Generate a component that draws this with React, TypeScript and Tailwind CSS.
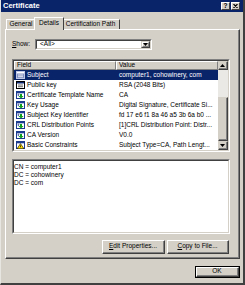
import React from "react";

const font = { fontFamily: '"Liberation Sans", Arial, sans-serif' };

function DocIcon({ selected }: { selected?: boolean }) {
  return (
    <svg width="9" height="8" viewBox="0 0 9 8" className="shrink-0">
      <rect x="0.5" y="0.5" width="8" height="7" fill={selected ? "#7f8fc0" : "#ffffff"} stroke={selected ? "#c0c8e8" : "#000000"} />
      <rect x="1" y="1" width="7" height="1.5" fill={selected ? "#ffffff" : "#0a246a"} />
      <line x1="2" y1="4" x2="7" y2="4" stroke={selected ? "#ffffff" : "#404040"} strokeWidth="0.8" />
      <line x1="2" y1="5.7" x2="7" y2="5.7" stroke={selected ? "#ffffff" : "#404040"} strokeWidth="0.8" />
    </svg>
  );
}

function ExtIcon() {
  return (
    <svg width="9" height="8" viewBox="0 0 9 8" className="shrink-0">
      <rect x="0.5" y="0.5" width="8" height="7" fill="#ffffff" stroke="#1c3a8e" />
      <rect x="1" y="1" width="7" height="1.3" fill="#1c3a8e" />
      <path d="M1.5 3.2 L3 3.2 L2 4.6 L3 4.6" stroke="#1c3a8e" strokeWidth="0.7" fill="none" />
      <path d="M4 3 L6 3 L6 5 L7.5 5 L5 7.6 L2.5 5 L4 5 Z" fill="#10a020" />
    </svg>
  );
}

function WarnIcon() {
  return (
    <svg width="9" height="8" viewBox="0 0 9 8" className="shrink-0">
      <rect x="0.5" y="0.5" width="8" height="7" fill="#ffffff" stroke="#1c3a8e" />
      <rect x="1" y="1" width="7" height="1.3" fill="#1c3a8e" />
      <path d="M4.5 2.6 L8 7.8 L1 7.8 Z" fill="#ffe000" stroke="#000000" strokeWidth="0.6" />
      <line x1="4.5" y1="4.3" x2="4.5" y2="6.3" stroke="#000" strokeWidth="0.7" />
    </svg>
  );
}

function UpArrow() {
  return (
    <svg width="5" height="3" viewBox="0 0 5 3">
      <path d="M2.5 0 L5 3 L0 3 Z" fill="#000" />
    </svg>
  );
}
function DownArrow() {
  return (
    <svg width="5" height="3" viewBox="0 0 5 3">
      <path d="M0 0 L5 0 L2.5 3 Z" fill="#000" />
    </svg>
  );
}

function ScrollBtn({ children }: { children: React.ReactNode }) {
  return (
    <div className="h-[9px] w-[10px] border border-t-[#d4d0c8] border-l-[#d4d0c8] border-b-[#404040] border-r-[#404040] bg-[#d4d0c8]">
      <div className="h-full w-full border border-t-white border-l-white border-b-[#808080] border-r-[#808080] border-t-0 border-l-0 flex items-center justify-center">
        {children}
      </div>
    </div>
  );
}

function Button({ children, w, isDefault }: { children: React.ReactNode; w: string; isDefault?: boolean }) {
  return (
    <div className={`${w} h-full ${isDefault ? "border border-black" : ""}`}>
      <div className="h-full w-full border border-t-white border-l-white border-b-[#404040] border-r-[#404040] bg-[#d4d0c8]">
        <div className="h-full w-full border border-t-0 border-l-0 border-b-[#808080] border-r-[#808080] flex items-center justify-center text-[6.5px] text-black leading-none">
          {children}
        </div>
      </div>
    </div>
  );
}

const rows: { field: string; value: string; icon: "doc" | "ext" | "warn"; selected?: boolean }[] = [
  { field: "Subject", value: "computer1, cohowinery, com", icon: "doc", selected: true },
  { field: "Public key", value: "RSA (2048 Bits)", icon: "doc" },
  { field: "Certificate Template Name", value: "CA", icon: "ext" },
  { field: "Key Usage", value: "Digital Signature, Certificate Si...", icon: "ext" },
  { field: "Subject Key Identifier", value: "fd 17 e6 f1 8a 46 a5 3b 6a b0 ...", icon: "ext" },
  { field: "CRL Distribution Points", value: "[1]CRL Distribution Point: Distr...", icon: "ext" },
  { field: "CA Version", value: "V0.0", icon: "ext" },
  { field: "Basic Constraints", value: "Subject Type=CA, Path Lengt...", icon: "warn" },
];

export default function App() {
  return (
    <div style={font} className="w-[245px] h-[285px] bg-[#d4d0c8] overflow-hidden">
      <div className="w-full h-full border-l border-l-[#e8e6e1] border-r-2 border-r-[#404040] border-b-2 border-b-[#404040] flex flex-col">
        {/* Title bar */}
        <div className="h-[12px] bg-[#0a246a] flex items-center pl-[2px] pr-[3px]">
          <span className="text-white font-bold text-[7.5px] leading-none">Certificate</span>
          <div className="ml-auto flex">
            <div className="w-[9px] h-[8px] bg-[#d4d0c8] border border-t-white border-l-white border-b-[#404040] border-r-[#404040] flex items-center justify-center">
              <span className="text-black font-bold text-[6.5px] leading-none">?</span>
            </div>
            <div className="ml-[1px] w-[9px] h-[8px] bg-[#d4d0c8] border border-t-white border-l-white border-b-[#404040] border-r-[#404040] flex items-center justify-center">
              <svg width="5" height="4" viewBox="0 0 5 4">
                <path d="M0.5 0 L4.5 4 M4.5 0 L0.5 4" stroke="#000" strokeWidth="1.1" />
              </svg>
            </div>
          </div>
        </div>

        {/* Tabs */}
        <div className="mt-[5px] h-[12px] flex items-end pl-[5px] text-[6.5px] text-black leading-none">
          <div className="w-[30px] h-[10px] border-t border-l border-t-white border-l-white border-r border-r-[#404040] flex items-center justify-center">
            General
          </div>
          <div className="relative z-10 -ml-[2px] -mb-[1px] w-[30px] h-[13px] bg-[#d4d0c8] border-t border-l border-t-white border-l-white border-r border-r-[#404040] flex items-center justify-center pb-[1px]">
            Details
          </div>
          <div className="-ml-[2px] w-[58px] h-[10px] border-t border-t-white border-r border-r-[#404040] flex items-center justify-center">
            Certification Path
          </div>
        </div>

        {/* Panel */}
        <div className="ml-[4px] w-[235px] h-[230px] border-t border-l border-t-white border-l-white border-b border-r border-b-[#404040] border-r-[#404040]">
          <div className="h-full w-full border-b border-r border-b-[#808080] border-r-[#808080] flex flex-col pl-[6px] pr-[6px]">
            {/* Show row */}
            <div className="mt-[9px] h-[11px] flex items-center text-[6.5px] leading-none text-black">
              <span className="w-[23px] pl-[0px]"><span className="underline">S</span>how:</span>
              <div className="w-[117px] h-[11px] border border-t-[#808080] border-l-[#808080] border-b-white border-r-white">
                <div className="w-full h-full border border-t-[#404040] border-l-[#404040] border-b-[#d4d0c8] border-r-[#d4d0c8] bg-white flex items-center">
                  <span className="pl-[3px]">&lt;All&gt;</span>
                  <div className="ml-auto h-full">
                    <div className="w-[9px] h-full border border-t-[#d4d0c8] border-l-[#d4d0c8] border-b-[#404040] border-r-[#404040] bg-[#d4d0c8]">
                      <div className="w-full h-full border-b border-r border-t border-l border-t-white border-l-white border-b-[#808080] border-r-[#808080] flex items-center justify-center">
                        <DownArrow />
                      </div>
                    </div>
                  </div>
                </div>
              </div>
            </div>

            {/* List */}
            <div className="mt-[9px] w-[218px] h-[93px] border border-t-[#808080] border-l-[#808080] border-b-white border-r-white">
              <div className="w-full h-full border border-t-[#404040] border-l-[#404040] border-b-[#d4d0c8] border-r-[#d4d0c8] bg-white flex">
                <div className="flex-1 flex flex-col text-[6.5px] leading-none text-black">
                  <div className="h-[9px] flex">
                    <div className="w-[102px] h-full bg-[#d4d0c8] border-t border-l border-t-white border-l-white border-r border-b border-r-[#808080] border-b-[#808080] flex items-center pl-[2px]">
                      Field
                    </div>
                    <div className="w-[102px] h-full bg-[#d4d0c8] border-t border-l border-t-white border-l-white border-r border-b border-r-[#808080] border-b-[#808080] flex items-center pl-[2px]">
                      Value
                    </div>
                  </div>
                  {rows.map((r) => (
                    <div key={r.field} className={`h-[10px] flex items-center whitespace-nowrap ${r.selected ? "bg-[#0a246a] text-white" : ""}`}>
                      <div className="w-[102px] flex items-center pl-[2px] gap-[2px]">
                        {r.icon === "doc" ? <DocIcon selected={r.selected} /> : r.icon === "ext" ? <ExtIcon /> : <WarnIcon />}
                        <span>{r.field}</span>
                      </div>
                      <div className="pl-[3px]">{r.value}</div>
                    </div>
                  ))}
                </div>
                {/* Scrollbar */}
                <div className="w-[10px] h-full flex flex-col">
                  <ScrollBtn>
                    <UpArrow />
                  </ScrollBtn>
                  <div className="h-[27px] bg-[#ebe9e5]" />
                  <div className="flex-1 bg-[#d4d0c8] border border-t-[#d4d0c8] border-l-[#d4d0c8] border-b-[#404040] border-r-[#404040]">
                    <div className="w-full h-full border-t border-l border-t-white border-l-white border-b border-r border-b-[#808080] border-r-[#808080] border-t-0 border-l-0" />
                  </div>
                  <ScrollBtn>
                    <DownArrow />
                  </ScrollBtn>
                </div>
              </div>
            </div>

            {/* Details box */}
            <div className="mt-[7px] w-[218px] h-[75px] border border-t-[#808080] border-l-[#808080] border-b-white border-r-white">
              <div className="w-full h-full border border-t-[#404040] border-l-[#404040] border-b-[#d4d0c8] border-r-[#d4d0c8] bg-white pt-[2px] pl-[0px] text-[6.5px] leading-[8px] text-black">
                <div>CN = computer1</div>
                <div>DC = cohowinery</div>
                <div>DC = com</div>
              </div>
            </div>

            {/* Buttons */}
            <div className="mt-[6px] h-[14px] flex justify-end pr-[1px] gap-[2px] w-[218px]">
              <Button w="w-[63px]">
                <span>
                  <span className="underline">E</span>dit Properties...
                </span>
              </Button>
              <Button w="w-[62px]">
                <span>
                  <span className="underline">C</span>opy to File...
                </span>
              </Button>
            </div>
          </div>
        </div>

        {/* OK */}
        <div className="mt-[7px] h-[12px] flex justify-end pr-[3px]">
          <Button w="w-[45px]" isDefault>
            OK
          </Button>
        </div>
      </div>
    </div>
  );
}
